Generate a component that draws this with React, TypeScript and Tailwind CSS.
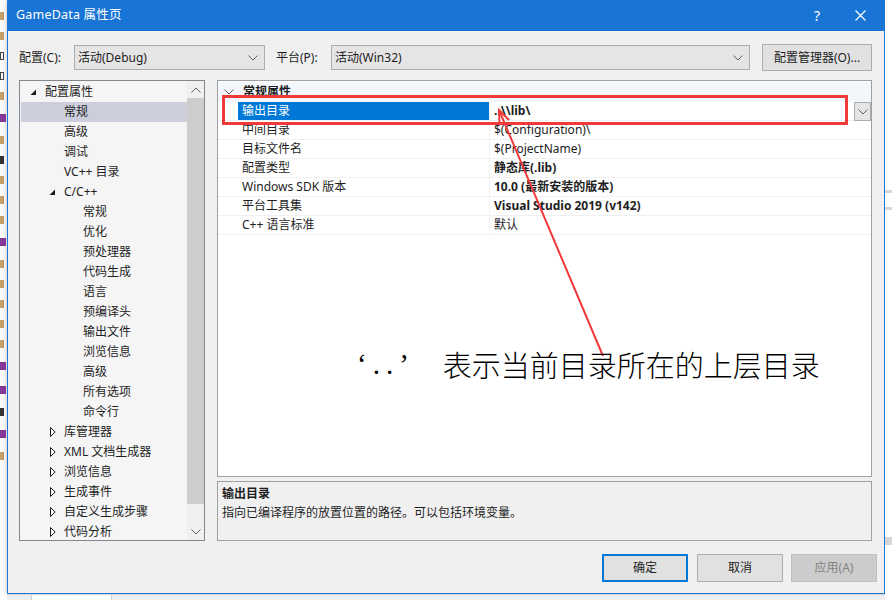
import React from 'react';

type TreeRow = {
  text: string;
  level: 0 | 1 | 2;
  toggle?: 'open' | 'closed';
  selected?: boolean;
};

const treeRows: TreeRow[] = [
  { text: '配置属性', level: 0, toggle: 'open' },
  { text: '常规', level: 1, selected: true },
  { text: '高级', level: 1 },
  { text: '调试', level: 1 },
  { text: 'VC++ 目录', level: 1 },
  { text: 'C/C++', level: 1, toggle: 'open' },
  { text: '常规', level: 2 },
  { text: '优化', level: 2 },
  { text: '预处理器', level: 2 },
  { text: '代码生成', level: 2 },
  { text: '语言', level: 2 },
  { text: '预编译头', level: 2 },
  { text: '输出文件', level: 2 },
  { text: '浏览信息', level: 2 },
  { text: '高级', level: 2 },
  { text: '所有选项', level: 2 },
  { text: '命令行', level: 2 },
  { text: '库管理器', level: 1, toggle: 'closed' },
  { text: 'XML 文档生成器', level: 1, toggle: 'closed' },
  { text: '浏览信息', level: 1, toggle: 'closed' },
  { text: '生成事件', level: 1, toggle: 'closed' },
  { text: '自定义生成步骤', level: 1, toggle: 'closed' },
  { text: '代码分析', level: 1, toggle: 'closed' },
];

const indent = ['pl-[0px]', 'pl-[19px]', 'pl-[38px]'];

type Prop = { name: string; value: string; bold?: boolean; selected?: boolean };

const props: Prop[] = [
  { name: '输出目录', value: '..\\\\lib\\', bold: true, selected: true },
  { name: '中间目录', value: '$(Configuration)\\' },
  { name: '目标文件名', value: '$(ProjectName)' },
  { name: '配置类型', value: '静态库(.lib)', bold: true },
  { name: 'Windows SDK 版本', value: '10.0 (最新安装的版本)', bold: true },
  { name: '平台工具集', value: 'Visual Studio 2019 (v142)', bold: true },
  { name: 'C++ 语言标准', value: '默认' },
];

const Chevron = ({ className = '' }: { className?: string }) => (
  <svg width="10" height="6" viewBox="0 0 10 6" className={className}>
    <path d="M0.5 0.5 L5 5 L9.5 0.5" fill="none" stroke="#606060" strokeWidth="1" />
  </svg>
);

const Toggle = ({ kind }: { kind: 'open' | 'closed' }) =>
  kind === 'open' ? (
    <svg width="7" height="7" viewBox="0 0 7 7">
      <path d="M6 0.5 L6 6 L0.5 6 Z" fill="#1e1e1e" />
    </svg>
  ) : (
    <svg width="6" height="10" viewBox="0 0 6 10">
      <path d="M0.5 0.5 L5.2 5 L0.5 9.5 Z" fill="none" stroke="#1e1e1e" strokeWidth="1" />
    </svg>
  );

const Combo = ({ text, width }: { text: string; width: string }) => (
  <div
    className={`${width} h-[25px] bg-[#e5e5e5] border border-[#adadad] flex items-center justify-between pl-[3px] pr-[6px]`}
  >
    <span>{text}</span>
    <Chevron />
  </div>
);

// the IDE behind the dialog only shows a sliver of its tree on the left
const LeftEdge = () => {
  const marks = ['o', 'o', 'b', 'b', 'o', 'p', 'o', 'k', 'o', 'o', 'o', 'p', 'o', 'o', 'o', 'o', 'o', 'p', 'p', 'k', 'p', 'o'];
  return (
    <div className="w-[7px] h-full bg-white overflow-hidden flex flex-col pt-[12px] gap-[12px]">
      {marks.map((m, i) => (
        <div
          key={i}
          className={`h-[8px] w-[4px] ${
            m === 'p' ? 'bg-[#8a3a9a] w-[6px] h-[4px] my-[2px]' : m === 'k' ? 'bg-[#333]' : m === 'b' ? 'border border-[#444]' : 'bg-[#c9a26a]'
          }`}
        />
      ))}
    </div>
  );
};

export default function App() {
  return (
    <div className="w-[892px] h-[600px] overflow-hidden relative bg-white flex font-['Noto_Sans','Noto_Sans_CJK_SC',sans-serif] text-[12px] text-[#1e1e1e]">
      <LeftEdge />

      <div className="flex flex-col w-[878px]">
        {/* dialog */}
        <div className="w-[878px] h-[594px] flex flex-col bg-[#f0f0f0] border-x border-b border-[#1c74d3] shadow-[0_0_6px_rgba(0,0,0,0.25)]">
          {/* title bar */}
          <div className="h-[31px] bg-[#1874d5] flex items-center text-white shrink-0">
            <span className="pl-[8px] text-[12.5px] tracking-[0.2px]">GameData 属性页</span>
            <span className="ml-auto mr-[35px] text-[14px]">?</span>
            <svg width="11" height="11" viewBox="0 0 11 11" className="mr-[18px]">
              <path d="M0.5 0.5 L10.5 10.5 M10.5 0.5 L0.5 10.5" stroke="white" strokeWidth="1.2" />
            </svg>
          </div>

          {/* config row */}
          <div className="mt-[13px] h-[27px] flex items-center pl-[11px]">
            <span className="w-[55px]">配置(C):</span>
            <Combo text="活动(Debug)" width="w-[191px]" />
            <span className="w-[55px] ml-[11px]">平台(P):</span>
            <Combo text="活动(Win32)" width="w-[419px]" />
            <button className="ml-[12px] w-[110px] h-[27px] bg-[#e1e1e1] border border-[#adadad] flex items-center justify-center">
              配置管理器(O)...
            </button>
          </div>

          {/* panels */}
          <div className="mt-[9px] flex pl-[11px] gap-[12px]">
            {/* tree */}
            <div className="w-[186px] h-[461px] border border-[#828790] bg-[#f5f5f5] flex overflow-hidden">
              <div className="flex-1 pt-[1px]">
                {treeRows.map((r, i) => (
                  <div
                    key={i}
                    className={`h-[20px] flex items-center ${indent[r.level]} ${
                      r.selected ? 'bg-[#cccedb] ml-[1px]' : ''
                    }`}
                  >
                    <div className={`w-[25px] shrink-0 flex items-center ${r.toggle === 'closed' ? 'pl-[11px]' : 'pl-[10px]'}`}>
                      {r.toggle && <Toggle kind={r.toggle} />}
                    </div>
                    <span className={`whitespace-nowrap ${r.selected ? '-ml-[1px]' : ''}`}>{r.text}</span>
                  </div>
                ))}
              </div>
              <div className="w-[17px] shrink-0 bg-[#f0f0f0] flex flex-col items-center">
                <div className="h-[17px] flex items-center justify-center">
                  <Chevron className="rotate-180" />
                </div>
                <div className="w-[17px] h-[406px] bg-[#cdcdcd]" />
                <div className="flex-1" />
                <div className="h-[17px] flex items-center justify-center">
                  <Chevron />
                </div>
              </div>
            </div>

            {/* right column */}
            <div className="w-[655px] flex flex-col gap-[4px]">
              <div className="h-[397px] border border-[#a0a0a0] bg-white">
                <div className="h-[20px] mt-[1px] bg-[#f3f6fb] flex items-center">
                  <div className="w-[20px] flex justify-center pl-[1px]">
                    <Chevron />
                  </div>
                  <span className="pl-[5px] font-bold">常规属性</span>
                </div>
                {props.map((p, i) => (
                  <div key={i} className="h-[19px] flex border-b border-[#f0f0f0]">
                    <div className="w-[20px] shrink-0" />
                    <div
                      className={`w-[252px] shrink-0 flex items-center pl-[4px] border-r border-[#f0f0f0] ${
                        p.selected ? 'bg-[#0078d7] text-white' : ''
                      }`}
                    >
                      {p.name}
                    </div>
                    <div className={`flex-1 flex items-center pl-[4px] ${p.bold ? 'font-bold' : ''}`}>{p.value}</div>
                    {p.selected && (
                      <div className="w-[17px] h-[19px] bg-[#e5e5e5] border border-[#adadad] flex items-center justify-center">
                        <Chevron />
                      </div>
                    )}
                  </div>
                ))}
              </div>
              <div className="h-[60px] border border-[#a0a0a0] bg-[#f0f0f0] pl-[4px] pt-[2px] leading-[19px]">
                <div className="font-bold">输出目录</div>
                <div>指向已编译程序的放置位置的路径。可以包括环境变量。</div>
              </div>
            </div>
          </div>

          {/* buttons */}
          <div className="mt-[13px] flex pl-[594px] gap-[9px]">
            <button className="w-[86px] h-[28px] bg-[#e1e1e1] border-2 border-[#0078d7]">确定</button>
            <button className="w-[86px] h-[28px] bg-[#e1e1e1] border border-[#adadad]">取消</button>
            <button className="w-[86px] h-[28px] bg-[#cccccc] border border-[#bfbfbf] text-[#838383] -ml-[1px]">应用(A)</button>
          </div>
        </div>
        {/* strip of the IDE under the dialog */}
        <div className="flex-1 bg-[#eeeeee] flex border-t border-[#d9d9d9]">
          <div className="w-[25px] border-r border-[#cfcfcf]" />
          <div className="w-[80px] border-r border-[#cfcfcf] bg-white" />
        </div>
      </div>

      {/* IDE to the right */}
      <div className="w-[7px] h-full bg-white flex flex-col">
        <div className="h-[190px]" />
        <div className="h-[3px] bg-[#d6d6d6]" />
        <div className="h-[14px]" />
        <div className="h-[3px] bg-[#d6d6d6]" />
        <div className="flex-1" />
        <div className="h-[8px] bg-[#d6d6d6] mb-[55px]" />
      </div>

      {/* annotation overlay */}
      <div className="absolute left-[222px] top-[95px] w-[626px] h-[30px] border-[3px] border-[#f03a3a]" />
      <svg className="absolute left-0 top-0 pointer-events-none" width="892" height="600">
        <line x1="603" y1="356" x2="499" y2="110" stroke="#f03a3a" strokeWidth="2" />
        <path d="M509 120 L499 110 L499.5 124" fill="none" stroke="#f03a3a" strokeWidth="2" />
      </svg>
      <div className="absolute left-[357px] top-[350px] flex items-center text-[29px] leading-none text-black whitespace-nowrap">
        <span className="font-['Liberation_Serif',serif] tracking-[6px]">‘..’</span>
        <span className="ml-[28px] font-['Noto_Sans_CJK_SC',sans-serif] font-light">表示当前目录所在的上层目录</span>
      </div>
    </div>
  );
}
